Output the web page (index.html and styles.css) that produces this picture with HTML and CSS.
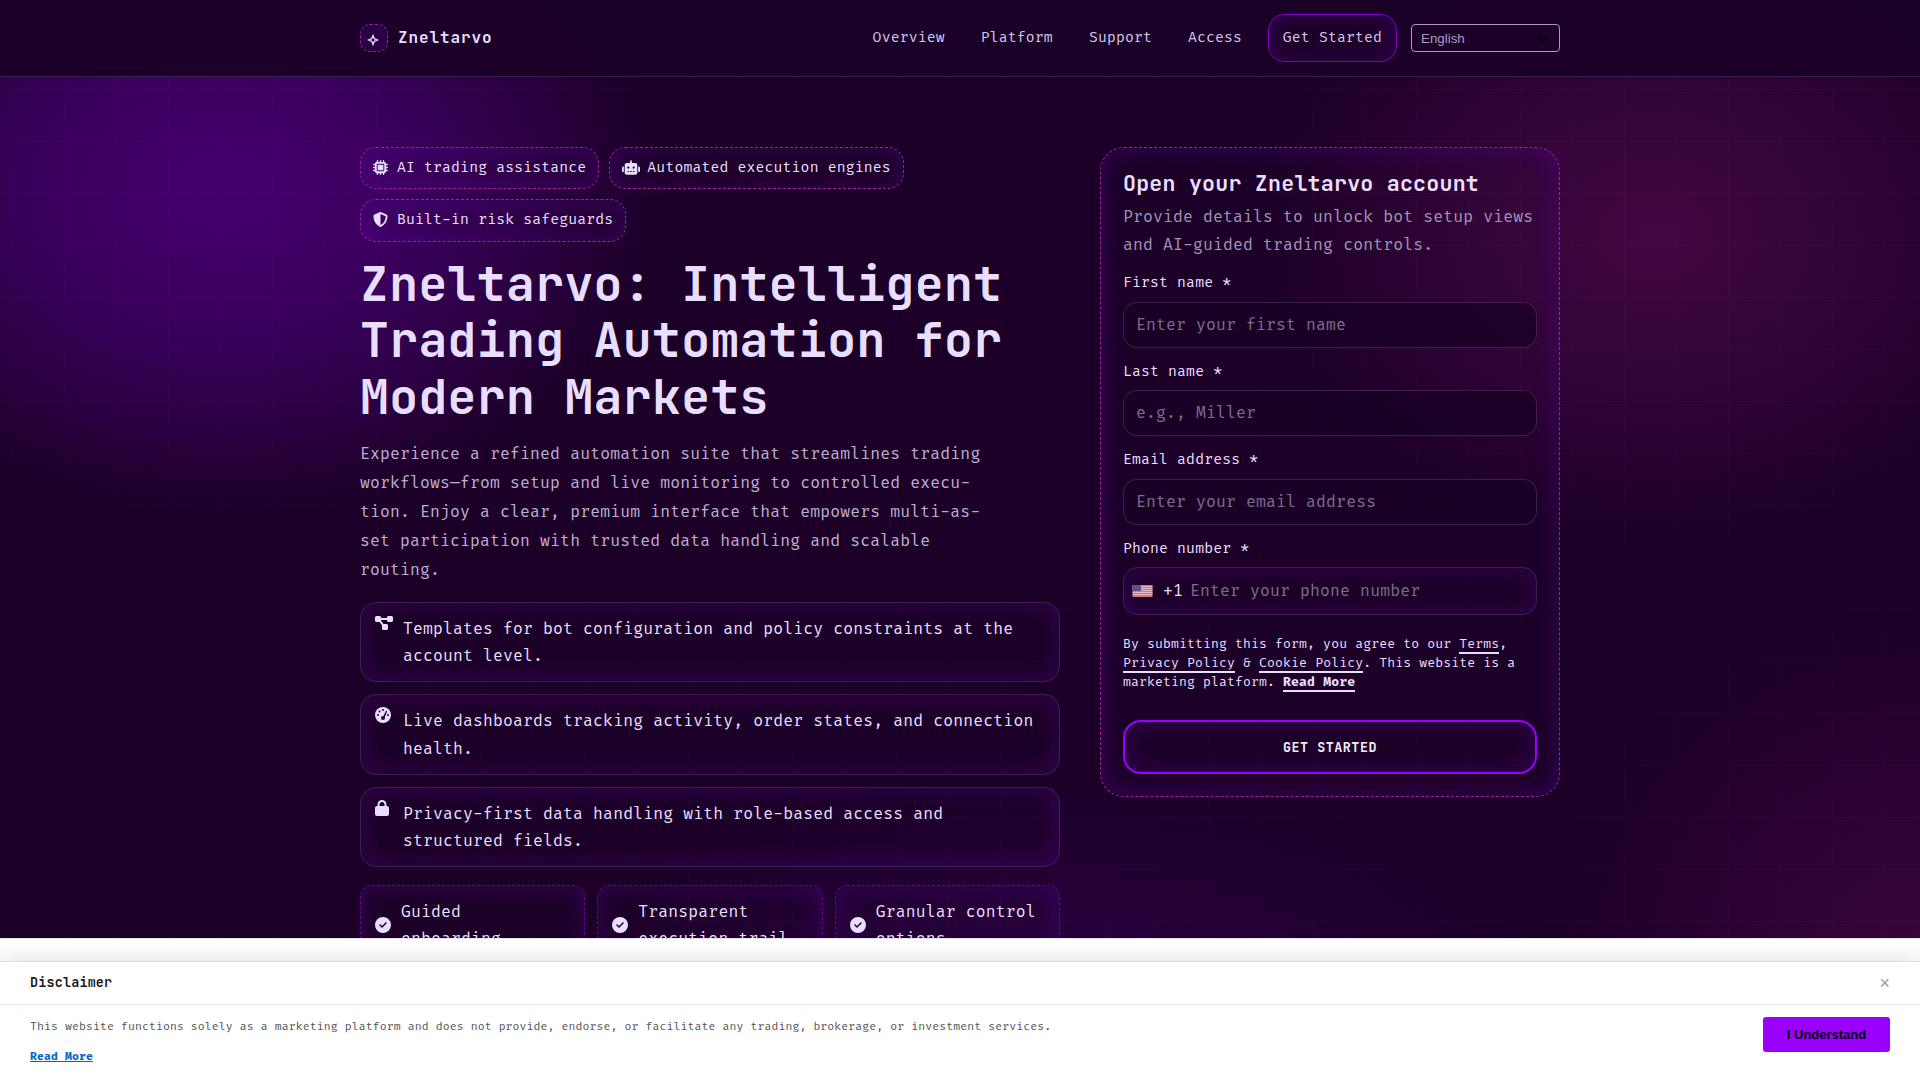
FILE: index.html
```html
<!DOCTYPE html>
<html lang="en">
<head>
    <meta charset="utf-8">
    <title>Zneltarvo</title>
    <link rel="stylesheet" href="styles.css">
</head>
<body>
    <header class="site-header">
        <div class="container header-inner">
            <a class="brand" href="#">
                <span class="brand-mark">
                    <svg viewBox="0 0 12 12"><path d="M6 1.500L7.300 4.700L10.500 6L7.300 7.300L6 10.500L4.700 7.300L1.500 6L4.700 4.700Z"/></svg>
                </span>
                <span class="brand-name">Zneltarvo</span>
            </a>
            <nav class="main-nav">
                <a href="#">Overview</a>
                <a href="#">Platform</a>
                <a href="#">Support</a>
                <a href="#">Access</a>
                <a class="nav-cta" href="#signup">Get Started</a>
                <div class="lang">
                    <select class="lang-select">
                        <option>English</option>
                    </select>
                </div>
            </nav>
        </div>
    </header>

    <main class="hero">
        <div class="container hero-grid">
            <section class="hero-copy">
                <div class="tags">
                    <span class="tag">
                        <svg class="icon" viewBox="0 0 512 512"><path d="M176 24c0-13.3-10.7-24-24-24s-24 10.7-24 24V64c-35.3 0-64 28.7-64 64H24c-13.3 0-24 10.7-24 24s10.7 24 24 24H64v56H24c-13.3 0-24 10.7-24 24s10.7 24 24 24H64v56H24c-13.3 0-24 10.7-24 24s10.7 24 24 24H64c0 35.3 28.7 64 64 64v40c0 13.3 10.7 24 24 24s24-10.7 24-24V448h56v40c0 13.3 10.7 24 24 24s24-10.7 24-24V448h56v40c0 13.3 10.7 24 24 24s24-10.7 24-24V448c35.3 0 64-28.7 64-64h40c13.3 0 24-10.7 24-24s-10.7-24-24-24H448V280h40c13.3 0 24-10.7 24-24s-10.7-24-24-24H448V176h40c13.3 0 24-10.7 24-24s-10.7-24-24-24H448c0-35.3-28.7-64-64-64V24c0-13.3-10.7-24-24-24s-24 10.7-24 24V64H280V24c0-13.3-10.7-24-24-24s-24 10.7-24 24V64H176V24zM160 128H352c17.7 0 32 14.3 32 32V352c0 17.7-14.3 32-32 32H160c-17.7 0-32-14.3-32-32V160c0-17.7 14.3-32 32-32zm192 32H160V352H352V160z" fill-rule="evenodd"/></svg>
                        AI trading assistance
                    </span>
                    <span class="tag tag-wide">
                        <svg class="icon" viewBox="0 0 640 512"><path fill-rule="evenodd" d="M320 0c17.7 0 32 14.3 32 32V96H472c39.8 0 72 32.2 72 72V440c0 39.8-32.2 72-72 72H168c-39.8 0-72-32.2-72-72V168c0-39.8 32.2-72 72-72H288V32c0-17.7 14.3-32 32-32zM208 384c-8.8 0-16 7.2-16 16s7.2 16 16 16h32c8.8 0 16-7.2 16-16s-7.2-16-16-16H208zm96 0c-8.8 0-16 7.2-16 16s7.2 16 16 16h32c8.8 0 16-7.2 16-16s-7.2-16-16-16H304zm96 0c-8.8 0-16 7.2-16 16s7.2 16 16 16h32c8.8 0 16-7.2 16-16s-7.2-16-16-16H400zM264 256a40 40 0 1 0-80 0 40 40 0 1 0 80 0zm152 40a40 40 0 1 0 0-80 40 40 0 1 0 0 80zM48 224H64V416H48c-26.5 0-48-21.5-48-48V272c0-26.5 21.5-48 48-48zm544 0c26.5 0 48 21.5 48 48v96c0 26.5-21.5 48-48 48H576V224h16z"/></svg>
                        Automated execution engines
                    </span>
                    <span class="tag">
                        <svg class="icon" viewBox="0 0 512 512"><path fill-rule="evenodd" d="M256 0c4.6 0 9.2 1 13.4 2.9L457.7 82.8c22 9.3 38.4 31 38.3 57.2c-.5 99.2-41.3 280.7-213.6 363.2c-16.7 8-36.1 8-52.8 0C57.3 420.7 16.5 239.2 16 140c-.1-26.2 16.3-47.9 38.3-57.2L242.7 2.9C246.8 1 251.4 0 256 0zm0 66.8V444.8C394 378 431.1 230.1 432 141.4L256 66.8z"/></svg>
                        Built-in risk safeguards
                    </span>
                </div>

                <h1>Zneltarvo: Intelligent Trading Automation for Modern Markets</h1>
                <p class="lead">Experience a refined automation suite that streamlines trading workflows—from setup and live monitoring to controlled execu&shy;tion. Enjoy a clear, premium interface that empowers multi-as&shy;set participation with trusted data handling and scalable routing.</p>

                <ul class="features">
                    <li>
                        <svg class="icon icon-wide" viewBox="0 0 576 512"><path d="M0 80C0 53.5 21.5 32 48 32h96c26.5 0 48 21.5 48 48V96H384V80c0-26.5 21.5-48 48-48h96c26.5 0 48 21.5 48 48v96c0 26.5-21.5 48-48 48H432c-26.5 0-48-21.5-48-48V160H192v16c0 1.7-.1 3.4-.3 5L272 288h96c26.5 0 48 21.5 48 48v96c0 26.5-21.5 48-48 48H272c-26.5 0-48-21.5-48-48V336c0-1.7.1-3.4.3-5L144 224H48c-26.5 0-48-21.5-48-48V80z"/></svg>
                        <span>Templates for bot configuration and policy constraints at the account level.</span>
                    </li>
                    <li>
                        <svg class="icon" viewBox="0 0 512 512">
                            <path d="M0 256a256 256 0 1 1 512 0A256 256 0 1 1 0 256z"/>
                            <g class="icon-cut">
                                <circle cx="256" cy="96" r="32"/>
                                <circle cx="144" cy="144" r="32"/>
                                <circle cx="96" cy="256" r="32"/>
                                <circle cx="416" cy="256" r="32"/>
                                <circle cx="256" cy="352" r="64"/>
                                <path d="M350 126a24 24 0 0 1 30 36L300 356l-52-22z"/>
                            </g>
                        </svg>
                        <span>Live dashboards tracking activity, order states, and connection health.</span>
                    </li>
                    <li>
                        <svg class="icon icon-narrow" viewBox="0 0 448 512"><path d="M144 144v48H304V144c0-44.2-35.8-80-80-80s-80 35.8-80 80zM80 192V144C80 64.5 144.5 0 224 0s144 64.5 144 144v48h16c35.3 0 64 28.7 64 64V448c0 35.3-28.7 64-64 64H64c-35.3 0-64-28.7-64-64V256c0-35.3 28.7-64 64-64H80z" fill-rule="evenodd"/></svg>
                        <span>Privacy-first data handling with role-based access and structured fields.</span>
                    </li>
                </ul>

                <div class="chips">
                    <div class="chip">
                        <svg class="icon" viewBox="0 0 512 512"><path d="M256 512A256 256 0 1 0 256 0a256 256 0 1 0 0 512zM369 209L241 337c-9.4 9.4-24.6 9.4-33.9 0l-64-64c-9.4-9.4-9.4-24.6 0-33.9s24.6-9.4 33.9 0l47 47L335 175c9.4-9.4 24.6-9.4 33.9 0s9.4 24.6 0 33.9z" fill-rule="evenodd"/></svg>
                        <span>Guided onboarding</span>
                    </div>
                    <div class="chip">
                        <svg class="icon" viewBox="0 0 512 512"><path d="M256 512A256 256 0 1 0 256 0a256 256 0 1 0 0 512zM369 209L241 337c-9.4 9.4-24.6 9.4-33.9 0l-64-64c-9.4-9.4-9.4-24.6 0-33.9s24.6-9.4 33.9 0l47 47L335 175c9.4-9.4 24.6-9.4 33.9 0s9.4 24.6 0 33.9z" fill-rule="evenodd"/></svg>
                        <span>Transparent execution trail</span>
                    </div>
                    <div class="chip">
                        <svg class="icon" viewBox="0 0 512 512"><path d="M256 512A256 256 0 1 0 256 0a256 256 0 1 0 0 512zM369 209L241 337c-9.4 9.4-24.6 9.4-33.9 0l-64-64c-9.4-9.4-9.4-24.6 0-33.9s24.6-9.4 33.9 0l47 47L335 175c9.4-9.4 24.6-9.4 33.9 0s9.4 24.6 0 33.9z" fill-rule="evenodd"/></svg>
                        <span>Granular control options</span>
                    </div>
                </div>
            </section>

            <form class="signup-card" id="signup">
                <h2>Open your Zneltarvo account</h2>
                <p class="signup-intro">Provide details to unlock bot setup views and AI-guided trading controls.</p>

                <label for="firstName">First name *</label>
                <input type="text" id="firstName" placeholder="Enter your first name">

                <label for="lastName">Last name *</label>
                <input type="text" id="lastName" placeholder="e.g., Miller">

                <label for="email">Email address *</label>
                <input type="email" id="email" placeholder="Enter your email address">

                <label for="phone">Phone number *</label>
                <div class="phone-field">
                    <svg class="flag" viewBox="0 0 20 12">
                        <rect width="20" height="12" fill="#dc7480"/>
                        <path d="M0 1.5h20M0 3.5h20M0 5.5h20M0 7.5h20M0 9.5h20" stroke="#e6c8d2" stroke-width=".8"/>
                        <rect width="8.5" height="6" fill="#5a5486"/>
                    </svg>
                    <span class="dial-code">+1</span>
                    <input type="tel" id="phone" placeholder="Enter your phone number">
                </div>

                <p class="consent">By submitting this form, you agree to our <a href="#">Terms</a>, <a href="#">Privacy Policy</a> &amp; <a href="#">Cookie Policy</a>. This website is a marketing platform. <a href="#"><b>Read More</b></a></p>

                <button type="submit" class="submit-btn">GET STARTED</button>
            </form>
        </div>
    </main>

    <div class="disclaimer-bar">
        <div class="disclaimer">
            <div class="disclaimer-header">
                <span class="disclaimer-title">Disclaimer</span>
                <button class="close-btn">×</button>
            </div>
            <div class="disclaimer-body">
                <div class="disclaimer-text">
                    <p>This website functions solely as a marketing platform and does not provide, endorse, or facilitate any trading, brokerage, or investment services.</p>
                    <a href="#">Read More</a>
                </div>
                <button class="accept-btn">I Understand</button>
            </div>
        </div>
    </div>
</body>
</html>
```
FILE: styles.css
```css
:root {
    --bg: #1c0027;
    --text: #e8deff;
    --violet: #9900ff;
    --magenta: #a3209f;
    --line: rgba(232, 222, 255, 0.15);
    --glow: inset 0 0 24px rgba(106, 0, 190, 0.3);
    --mono: "Fira Code", "DejaVu Sans Mono", monospace;
    --head: "JetBrains Mono", "DejaVu Sans Mono", monospace;
}

* {
    box-sizing: border-box;
}

body {
    margin: 0;
    height: 1080px;
    overflow: hidden;
    color: var(--text);
    font-family: var(--mono);
    font-size: 16px;
    letter-spacing: 0.16px;
    line-height: 27.2px;
    background:
        radial-gradient(440px 330px at 225px 190px, rgba(102, 0, 170, 0.54), rgba(102, 0, 170, 0.43) 40%, transparent),
        radial-gradient(400px 310px at 1655px 235px, rgba(140, 20, 120, 0.36), transparent),
        radial-gradient(380px 370px at 1920px 970px, rgba(110, 10, 95, 0.36), transparent),
        radial-gradient(520px 230px at 1060px 1000px, rgba(85, 0, 150, 0.26), transparent),
        var(--bg);
}

h1, h2, p, ul {
    margin: 0;
    padding: 0;
}

a {
    color: inherit;
    text-decoration: none;
}

.container {
    width: 1200px;
    margin: 0 auto;
}

.icon {
    height: 16px;
    width: 16px;
    flex: none;
    fill: var(--text);
}

.icon-wide {
    width: 18px;
}

.icon-narrow {
    width: 14px;
}

.icon-cut {
    fill: #25003a;
}

/* Header */
.site-header {
    height: 77px;
    background: rgba(28, 0, 39, 0.94);
    border-bottom: 1px solid #38204a;
}

.header-inner {
    height: 76px;
    display: flex;
    align-items: center;
    justify-content: space-between;
}

.brand {
    display: flex;
    align-items: center;
    gap: 10px;
}

.brand-mark {
    display: flex;
    align-items: center;
    justify-content: center;
    width: 28px;
    height: 28px;
    padding: 3px 2px 0 0;
    border: 1px dashed var(--magenta);
    border-radius: 10px;
    background: rgba(70, 0, 130, 0.3);
}

.brand-mark svg {
    width: 12px;
    height: 12px;
    fill: none;
    stroke: var(--text);
    stroke-width: 1.3;
}

.brand-name {
    font-family: var(--head);
    font-weight: 700;
    font-size: 16px;
    letter-spacing: 0.9px;
}

.main-nav {
    display: flex;
    align-items: center;
    font-size: 14.4px;
    color: #d2c6e8;
}

.main-nav a {
    margin-right: 36px;
}

.main-nav a:nth-child(4) {
    margin-right: 25.7px;
}

.main-nav .nav-cta {
    height: 48px;
    padding: 0 14px;
    margin-right: 14px;
    line-height: 45px;
    border: 1px solid #7a00c8;
    border-radius: 16px;
    box-shadow: var(--glow);
}

.lang {
    position: relative;
}

.lang::after {
    content: "";
    position: absolute;
    right: 13px;
    top: 9px;
    width: 6px;
    height: 6px;
    border-right: 2px solid #0a0010;
    border-bottom: 2px solid #0a0010;
    transform: rotate(45deg);
    pointer-events: none;
}

.lang-select {
    display: block;
    appearance: none;
    width: 149px;
    height: 28px;
    padding: 0 9px;
    background: transparent;
    border: 1px solid #a79abd;
    border-radius: 4px;
    color: #a99dbf;
    font: 13.33px "Liberation Sans", Arial, sans-serif;
}

/* Hero */
.hero {
    height: 861px;
    overflow: hidden;
    padding-top: 70px;
    background-image:
        linear-gradient(to right, rgba(190, 120, 255, 0.028) 1px, transparent 1px),
        linear-gradient(to bottom, rgba(190, 120, 255, 0.028) 1px, transparent 1px);
    background-size: 52px 52px;
    background-position: 12px 12px;
}

.hero-grid {
    display: grid;
    grid-template-columns: 700px 460px;
    gap: 40px;
    align-items: start;
}

.tags {
    display: flex;
    flex-wrap: wrap;
    gap: 10px;
}

.tag {
    display: flex;
    align-items: center;
    gap: 9px;
    height: 42.3px;
    padding: 0 12px 2px;
    border: 1px dashed var(--magenta);
    border-radius: 16px;
    box-shadow: var(--glow);
    font-size: 14.4px;
}

.tag .icon {
    width: 15px;
    height: 15px;
}

.tag-wide {
    gap: 7px;
}

.tag-wide .icon {
    width: 18px;
}

h1 {
    margin-top: 14px;
    font-family: var(--head);
    font-size: 48px;
    font-weight: 700;
    line-height: 56.5px;
    letter-spacing: 0.4px;
}

.lead {
    width: 640px;
    margin-top: 15.4px;
    line-height: 28.8px;
    color: #bcaed3;
}

.features {
    list-style: none;
    margin-top: 17.6px;
    display: grid;
    gap: 12px;
}

.features li {
    display: grid;
    grid-template-columns: 18px 1fr;
    gap: 10px;
    padding: 12px 14px;
    border: 1px solid var(--line);
    border-radius: 16px;
    box-shadow: var(--glow);
}

.features span,
.chip span {
    padding-top: 1px;
    margin-bottom: -1px;
}

.chips {
    display: grid;
    grid-template-columns: repeat(3, 1fr);
    gap: 12px;
    margin-top: 18px;
}

.chip {
    display: flex;
    align-items: center;
    gap: 10px;
    padding: 12px 14px;
    border: 1px dashed #6a00a8;
    border-radius: 12px;
    box-shadow: var(--glow);
}

/* Sign up card */
.signup-card {
    padding: 22px;
    border: 1px dashed var(--magenta);
    border-radius: 24px;
    box-shadow: inset 0 0 26px rgba(90, 0, 170, 0.42);
}

h2 {
    font-family: var(--head);
    font-size: 21.6px;
    font-weight: 700;
    line-height: 26px;
    letter-spacing: 0.23px;
}

.signup-intro {
    margin: 8.3px -5px 11.7px 0;
    color: #a293b8;
}

.signup-card label {
    display: block;
    margin-top: 11px;
    font-size: 14.4px;
    line-height: 25.6px;
}

.signup-card input {
    display: block;
    width: 100%;
    height: 46px;
    margin-top: 5.8px;
    padding: 0 12px;
    background: rgba(26, 0, 38, 0.75);
    border: 1px solid var(--line);
    border-radius: 14px;
    color: var(--text);
    font: 16px var(--mono);
    letter-spacing: 0.16px;
}

.signup-card input::placeholder {
    color: #7d6c94;
}

.signup-card .phone-field {
    display: flex;
    align-items: center;
    height: 48px;
    margin-top: 5.8px;
    padding-left: 8px;
    border: 1px solid var(--line);
    border-radius: 14px;
    box-shadow: var(--glow);
}

.flag {
    width: 21px;
    height: 12px;
}

.dial-code {
    margin-left: 10px;
    padding-top: 1px;
}

.signup-card .phone-field input {
    flex: 1;
    height: 44px;
    margin: 0;
    padding: 1px 0 0 7px;
    border: none;
    background: none;
}

.consent {
    margin: 20.5px 0 27.5px;
    font-size: 12.8px;
    line-height: 19px;
    letter-spacing: 0.13px;
}

.consent a {
    border-bottom: 2px solid var(--text);
}

.submit-btn {
    display: block;
    width: 100%;
    height: 54px;
    background: none;
    border: 2px solid var(--violet);
    border-radius: 18px;
    box-shadow: var(--glow);
    color: #f4efff;
    font: 700 13.33px var(--head);
    letter-spacing: 0.55px;
}

/* Disclaimer */
.disclaimer-bar {
    position: fixed;
    left: 0;
    right: 0;
    bottom: 0;
    height: 142px;
    padding-top: 22px;
    overflow: hidden;
    background: #fff;
    border-top: 1px solid #e5e5e5;
}

.disclaimer {
    height: 119px;
    background: #fff;
    border-top: 1px solid #ddd;
    box-shadow: 0 -2px 20px rgba(0, 0, 0, 0.12);
}

.disclaimer-header {
    display: flex;
    justify-content: space-between;
    align-items: center;
    height: 43px;
    padding: 0 30px;
    border-bottom: 1px solid #e8e8e8;
}

.disclaimer-title {
    padding-bottom: 2px;
    font: 600 13.4px var(--head);
    letter-spacing: 0.2px;
    color: #1a1a1a;
}

.close-btn {
    padding: 0;
    background: none;
    border: none;
    color: #999;
    font: 18px "Liberation Sans", Arial, sans-serif;
}

.disclaimer-body {
    display: flex;
    justify-content: space-between;
    align-items: flex-start;
    padding: 12px 30px 0;
    font-size: 11.2px;
    line-height: 18px;
    letter-spacing: 0.11px;
    color: #555;
}

.disclaimer-text {
    padding-top: 1px;
}

.disclaimer-text a {
    display: inline-block;
    margin-top: 12px;
    color: #0066cc;
    font-weight: 700;
    text-decoration: underline;
}

.accept-btn {
    width: 127px;
    height: 35px;
    background: var(--violet);
    border: none;
    border-radius: 3px;
    color: #000;
    font: 700 13px "Liberation Sans", Arial, sans-serif;
}
```
